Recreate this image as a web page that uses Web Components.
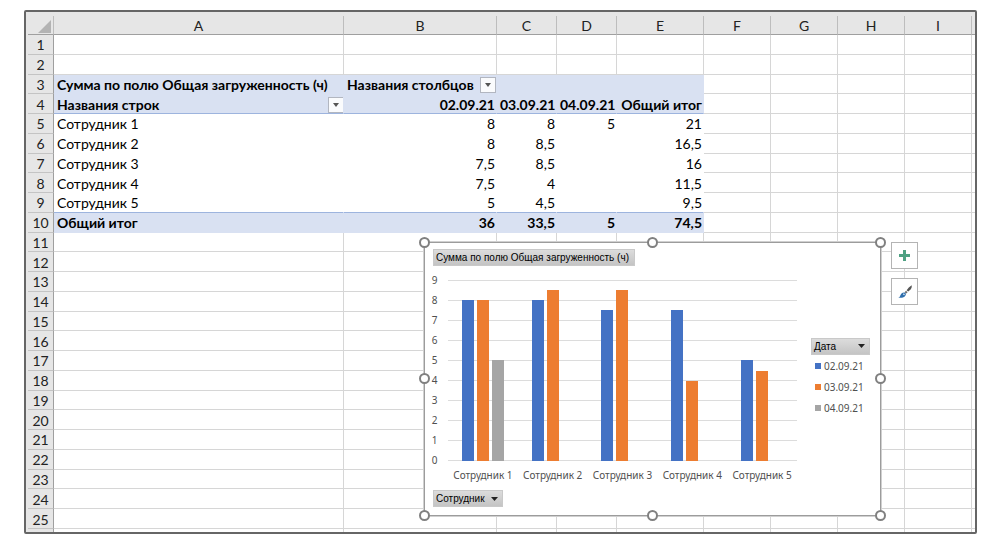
<!DOCTYPE html>
<html lang="ru">
<head>
<meta charset="utf-8">
<title>Сводная таблица</title>
<style>
  body { margin: 0; background: #fff; color: #000; font: 14px/18px Lato, "Noto Sans", sans-serif; }
</style>
</head>
<body>
<work-sheet>
  <sheet-grid></sheet-grid>
  <chart-frame slot="float"><pivot-chart></pivot-chart></chart-frame>
</work-sheet>

<script>
const define = (name, markup, setup) => {
  const template = document.createElement('template');
  template.innerHTML = markup;
  customElements.define(name, class extends HTMLElement {
    constructor() {
      super();
      this.attachShadow({ mode: 'open' }).append(template.content.cloneNode(true));
    }
    connectedCallback() { if (setup) setup(this.shadowRoot, this); }
  });
};

/* Window frame with the grid and the floating objects above it */
define('work-sheet', `
  <style>
    :host { display: block; position: relative; box-sizing: border-box; height: calc(100vh - 20px); min-height: 524px;
      margin: 10px 23px 10px 24px; padding: 4px 0 0 2px; border: 2px solid #666; border-radius: 2px;
      background: #e6e6e6; overflow: hidden; }
    ::slotted([slot=float]) { position: absolute; left: 398px; top: 230px; }
  </style>
  <slot></slot><slot name="float"></slot>`);

/* Small filter arrow in the pivot table */
define('filter-button', `
  <style>
    :host { display: block; flex: none; }
    button { display: flex; align-items: center; justify-content: center; width: 16px; height: 16px; padding: 0;
      border: 1px solid #b2b6c0; background: #fafbfd; }
  </style>
  <button type="button"><svg width="6" height="4" viewBox="0 0 6 4"><path d="M0 0H6L3 4Z" fill="#555"/></svg></button>`,
  (root, host) => root.querySelector('button').setAttribute('aria-label', host.getAttribute('label')));

define('sheet-grid', `
  <style>
    :host { display: block; height: 100%; }
    table { width: 100%; height: 100%; table-layout: fixed; border-collapse: separate; border-spacing: 0; background: #fff; }
    th, td { padding: 2px 0 0; line-height: 16px; border: 0 solid #d6d6d6; border-width: 0 1px 1px 0; white-space: nowrap;
      overflow: hidden; vertical-align: middle; }
    thead th, tbody th { background: #e6e6e6; font-weight: 400; text-align: center; color: #222; }
    thead tr { height: 19px; }
    thead th { border-color: #bdbdbd; border-bottom-color: #9f9f9f; }
    tbody th { border-color: #c4c4c4; border-right-color: #9f9f9f; }
    thead th:first-child { border-right-color: #bdbdbd; text-align: right; }
    thead svg { display: block; margin-left: auto; margin-right: 2px; }
    td { padding: 2px 2px 0 3px; }
    .stub { height: 3px; }
    .stub th, .stub td { padding: 0; border-bottom: 0; line-height: 0; }
    .last { border-right: 0; }
    .pivot { border-color: transparent; }
    .num { padding-right: 1px; text-align: right; }
    .fill { background: #d9e1f2; font-weight: 700; }
    .rule { border-bottom-color: #9db4de; }
    .cell { display: flex; align-items: center; gap: 6px; }
    .spread { justify-content: space-between; margin-right: -3px; }
    .r { width: 26px } .a { width: 290px } .b { width: 153px } .c { width: 60px } .e { width: 87px } .f { width: 67px }
  </style>
  <table>
    <colgroup><col class="r"><col class="a"><col class="b"><col class="c"><col class="c"><col class="e"><col class="f"><col class="f"><col class="f"><col class="f"><col></colgroup>
    <thead><tr></tr></thead><tbody></tbody>
  </table>`,
  root => {
    const letters = ['A', 'B', 'C', 'D', 'E', 'F', 'G', 'H', 'I'];
    const rows = {
      3: ['Сумма по полю Общая загруженность (ч)', '<div class="cell">Названия столбцов<filter-button label="Фильтр столбцов"></filter-button></div>'],
      4: ['<div class="cell spread">Названия строк<filter-button label="Фильтр строк"></filter-button></div>', '02.09.21', '03.09.21', '04.09.21', 'Общий итог'],
      5: ['Сотрудник 1', '8', '8', '5', '21'],
      6: ['Сотрудник 2', '8', '8,5', '', '16,5'],
      7: ['Сотрудник 3', '7,5', '8,5', '', '16'],
      8: ['Сотрудник 4', '7,5', '4', '', '11,5'],
      9: ['Сотрудник 5', '5', '4,5', '', '9,5'],
      10: ['Общий итог', '36', '33,5', '5', '74,5']
    };
    root.querySelector('thead tr').innerHTML =
      '<th><svg width="13" height="13" viewBox="0 0 13 13"><path d="M13 0V13H0Z" fill="#b3b3b3"/></svg></th>' +
      letters.map(l => `<th scope="col">${l}</th>`).join('') + '<th class="last"></th>';
    let html = '';
    for (let r = 1; r <= 26; r++) {
      html += r === 26 ? '<tr class="stub"><th></th>' : `<tr><th scope="row">${r}</th>`;
      for (let c = 0; c < 10; c++) {
        const cls = [];
        if (rows[r] && c < 5) {
          cls.push('pivot');
          if (r < 5 || r === 10) cls.push('fill');
          if (r === 4 || r === 9) cls.push('rule');
          if (c > 0 && r > 3) cls.push('num');
        }
        if (c === 9) cls.push('last');
        html += `<td class="${cls.join(' ')}">${(rows[r] && rows[r][c]) || ''}</td>`;
      }
      html += '</tr>';
    }
    root.querySelector('tbody').innerHTML = html;
  });

/* Selection frame: eight handles round the object, tool buttons beside it */
define('chart-frame', `
  <style>
    :host { display: flex; align-items: flex-start; gap: 10px; }
    .box { position: relative; box-sizing: border-box; width: 457px; border: 1px solid #9c9c9c; outline: 1px solid #d0d0d0; background: #fff; }
    i { position: absolute; box-sizing: border-box; width: 11px; height: 11px; margin: -6px; border: 2px solid #808080; border-radius: 50%; background: #fff; }
    .t { top: 0 } .m { top: 50% } .d { top: 100%; margin-top: -5px } .l { left: 0 } .c { left: 50% } .r { left: 100%; margin-left: -5px }
    .tools { display: grid; gap: 9px; }
    .tools button { display: grid; place-items: center; width: 27px; height: 27px; padding: 0; border: 1px solid #b4b4b4; background: #fff; }
  </style>
  <div class="box"><slot></slot>
    <i class="t l"></i><i class="t c"></i><i class="t r"></i><i class="m l"></i><i class="m r"></i><i class="d l"></i><i class="d c"></i><i class="d r"></i>
  </div>
  <div class="tools">
    <button type="button" aria-label="Элементы диаграммы"><svg width="11" height="11" viewBox="0 0 11 11"><path d="M4 0H7V4H11V7H7V11H4V7H0V4H4Z" fill="#4fa183"/></svg></button>
    <button type="button" aria-label="Стили диаграммы"><svg width="14" height="14" viewBox="0 0 14 14">
      <path d="M13.6 0.2C14 1 13.8 3 12.6 4.4L10.2 6.6L8.6 5.2L10.8 2.6Z" fill="#555"/>
      <path d="M8 5.8L9.6 7.2L8.2 8.6L6.6 7.2Z" fill="#6b6b6b"/>
      <path d="M5.9 7.4C7.4 7.2 8.4 8.6 7.6 10.2C6.4 12.8 3 13.2 0.2 12.6C2 12 2 11 2.8 9.4C3.4 8.2 4.6 7.5 5.9 7.4Z" fill="#2f6fad"/>
      <path d="M5.4 8.6C6.5 8.4 7 9.2 6.4 10.1C5.6 10.4 4.9 9.6 5.4 8.6Z" fill="#fff"/></svg></button>
  </div>`);

/* Grey pivot field button */
define('field-button', `
  <style>
    :host { display: block; }
    button { box-sizing: border-box; display: flex; align-items: center; justify-content: space-between; width: 100%; height: 17px;
      padding: 0 4px 0 2px; border: 1px solid #c9c9c9; background: linear-gradient(#dcdcdc, #c4c4c4); color: #000;
      font: 10px/15px "Liberation Sans", "Noto Sans", sans-serif; white-space: nowrap; }
    svg { display: none; flex: none; }
    :host([menu]) svg { display: block; }
  </style>
  <button type="button"><slot></slot><svg width="7" height="4" viewBox="0 0 7 4"><path d="M0 0H7L3.5 4Z" fill="#222"/></svg></button>`);

/* One category: a bar for each value, heights on a scale of 0 to 9 */
define('bar-group', `
  <style>
    :host { display: flex; align-items: flex-end; justify-content: center; gap: 3px; height: 100%; }
    span { width: 12px; background: #4472c4; }
    span:nth-of-type(2) { background: #ed7d31; }
    span:nth-of-type(3) { background: #a5a5a5; }
  </style>`,
  (root, host) => host.getAttribute('values').split(' ').forEach(v => {
    const bar = document.createElement('span');
    bar.style.height = `calc(100% * ${v} / 9)`;
    root.append(bar);
  }));

define('chart-legend', `
  <style>
    :host { display: block; width: 59px; }
    ul { margin: 1px 0 0; padding: 0 0 0 4px; list-style: none; color: #505050; line-height: 21px; }
    li { display: flex; align-items: center; gap: 3px; }
    li::before { content: ""; width: 6px; height: 6px; background: #4472c4; }
    li:nth-child(2)::before { background: #ed7d31; }
    li:nth-child(3)::before { background: #a5a5a5; }
  </style>
  <field-button menu>Дата</field-button>
  <ul><li>02.09.21</li><li>03.09.21</li><li>04.09.21</li></ul>`);

define('pivot-chart', `
  <style>
    :host { display: flex; align-items: center; gap: 14px; padding: 6px 10px 8px 6px; color: #505050;
      font-family: "Noto Sans", sans-serif; font-size: 10px; }
    .main { flex: 1; display: grid; grid-template-columns: 7px 1fr; column-gap: 10px; }
    .title, .field { grid-column: 1 / 3; justify-self: start; margin-left: 2px; }
    .title { width: 202px; margin-bottom: 4px; }
    .field { width: 70px; margin-top: 6px; }
    .axis { line-height: 20px; text-align: center; }
    .plot { display: grid; grid-template-columns: repeat(5, 1fr); margin: 10px 0;
      height: 181px; background: repeating-linear-gradient(#dcdcdc 0 1px, transparent 1px 20px); }
    .names { grid-column: 2; display: grid; grid-template-columns: repeat(5, 1fr); margin-top: -5px; line-height: 18px; text-align: center; white-space: nowrap; }
  </style>
  <div class="main">
    <field-button class="title">Сумма по полю Общая загруженность (ч)</field-button>
    <div class="axis"><div>9</div><div>8</div><div>7</div><div>6</div><div>5</div><div>4</div><div>3</div><div>2</div><div>1</div><div>0</div></div>
    <div class="plot">
      <bar-group values="8 8 5"></bar-group><bar-group values="8 8.5 0"></bar-group><bar-group values="7.5 8.5 0"></bar-group>
      <bar-group values="7.5 4 0"></bar-group><bar-group values="5 4.5 0"></bar-group>
    </div>
    <div class="names"><span>Сотрудник 1</span><span>Сотрудник 2</span><span>Сотрудник 3</span><span>Сотрудник 4</span><span>Сотрудник 5</span></div>
    <field-button class="field" menu>Сотрудник</field-button>
  </div>
  <chart-legend></chart-legend>`);
</script>
</body>
</html>
